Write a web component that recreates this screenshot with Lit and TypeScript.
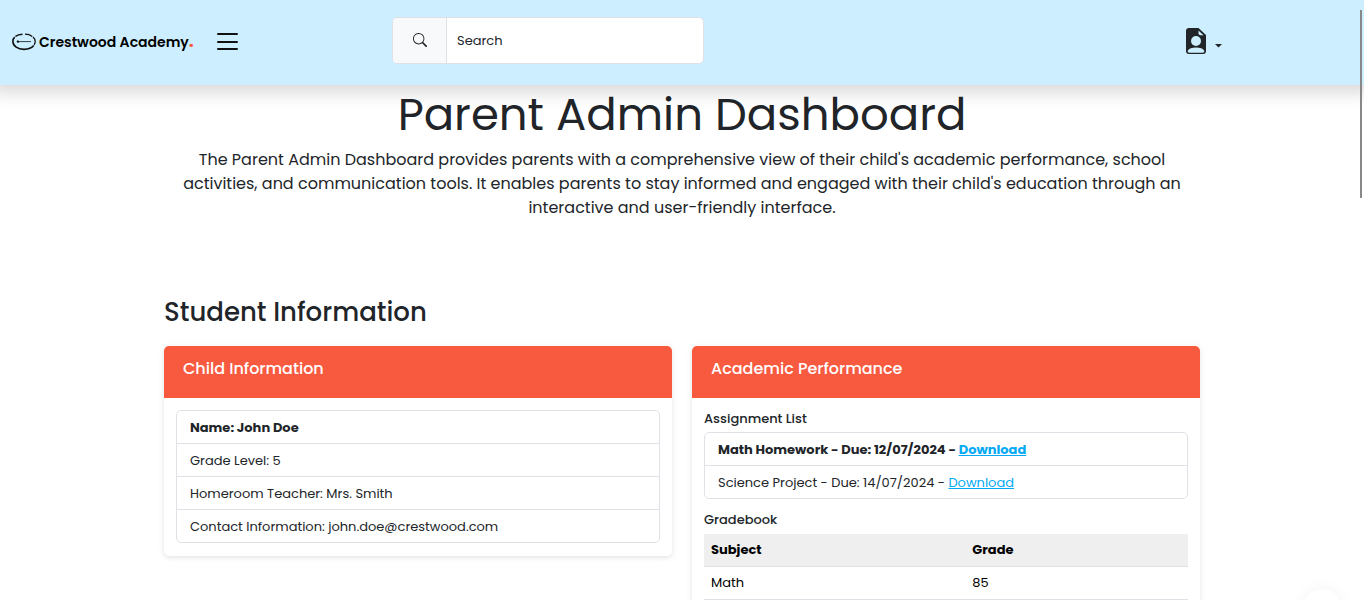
import { LitElement, html, css } from "lit";
import { customElement, state } from "lit/decorators.js";

const font = css`Poppins, Inter, "Open Sans", sans-serif`;

@customElement("site-header")
class SiteHeader extends LitElement {
  static styles = css`
    :host {
      display: block;
      position: relative;
      z-index: 1;
      background: #cceeff;
      box-shadow: 0 0 16px 8px rgba(0, 0, 0, 0.15);
      font-family: ${font};
    }
    .bar {
      display: flex;
      align-items: center;
      box-sizing: border-box;
      padding: 17px 12px 21px;
    }
    .start {
      display: flex;
      align-items: center;
      box-sizing: border-box;
      flex: 0 0 380px;
      gap: 20px;
      padding-top: 2px;
    }
    .brand {
      display: flex;
      align-items: center;
      gap: 3px;
      color: #000;
      font-size: 14px;
      line-height: 24px;
      font-weight: 600;
      text-decoration: none;
      white-space: nowrap;
    }
    .dot {
      color: #f85a40;
      font-size: 18px;
      line-height: 1;
      font-weight: 700;
    }
    button {
      display: flex;
      align-items: center;
      border: 0;
      padding: 0;
      background: none;
      color: #212529;
      font: inherit;
    }
    .search {
      display: flex;
      box-sizing: border-box;
      flex: 0 1 312px;
      height: 47px;
      border: 1px solid #dee2e6;
      border-radius: 5px;
      background: #fff;
      overflow: hidden;
    }
    .search button {
      box-sizing: border-box;
      flex: 0 0 54px;
      justify-content: center;
      padding-bottom: 2px;
      border-right: 1px solid #dee2e6;
      background: #f8f9fa;
    }
    input {
      flex: 1;
      min-width: 0;
      border: 0;
      outline: 0;
      padding: 0 10px;
      background: none;
      color: #212529;
      font-family: inherit;
      font-size: 13px;
    }
    input::placeholder { color: #212529; opacity: 1; }
    .account {
      gap: 8px;
      margin-left: auto;
      margin-right: 130px;
    }
    .caret { margin-top: 10px; }
    svg { display: block; }
  `;

  render() {
    return html`
      <header class="bar">
        <div class="start">
          <a class="brand" href="#">
            <svg width="24" height="18" viewBox="0 0 24 18" fill="none" stroke="#111" aria-hidden="true">
              <path d="M10.500 1.300C7.500 1.400 5 2.200 3.400 3.500M2.700 4.200C1.400 5.400.8 6.800.9 8.600c.2 4.400 4.800 7.800 11.100 7.800 4.300 0 7.900-1.400 9.800-3.800" stroke-width="1.600" />
              <path d="M13 1.200c3 0 5.600.9 7.300 2.200M21 4c1.400 1.200 2.200 2.700 2.200 4.500 0 1.200-.4 2.300-1 3.300" stroke-width="1.300" />
              <path d="M6 8.600h13" stroke-width=".8" />
              <path d="M4.500 8.600l1-1.300 1.500.7v1.400l-1.500.4z" fill="#111" stroke="none" />
            </svg>
            <span>Crestwood Academy<span class="dot">.</span></span>
          </a>
          <button type="button" aria-label="Toggle menu">
            <svg width="26" height="26" viewBox="0 0 26 26" stroke="#111" stroke-width="2" stroke-linecap="round">
              <path d="M4 5h19M4 13h19M4 20h19" />
            </svg>
          </button>
        </div>
        <form class="search" role="search" @submit=${(e: Event) => e.preventDefault()}>
          <button type="submit" aria-label="Search">
            <svg width="14" height="14" viewBox="0 0 16 16" fill="currentColor">
              <path d="M11.742 10.344a6.500 6.500 0 1 0-1.397 1.398h-.001q.044.060.098.115l3.850 3.850a1 1 0 0 0 1.415-1.414l-3.850-3.850a1 1 0 0 0-.115-.1zM12 6.500a5.500 5.500 0 1 1-11 0 5.500 5.500 0 0 1 11 0" />
            </svg>
          </button>
          <input type="search" placeholder="Search" aria-label="Search" />
        </form>
        <button class="account" type="button" aria-label="Account" aria-haspopup="menu">
          <svg width="22" height="28" viewBox="0 0 22 28">
            <path d="M4 1h9.500l7.500 7v16a3 3 0 0 1-3 3H4a3 3 0 0 1-3-3V4a3 3 0 0 1 3-3z" fill="#212529" />
            <path d="M13.500 3.500v2.700a2 2 0 0 0 2 2h3z" fill="#cceeff" />
            <circle cx="11" cy="14" r="5" fill="#cceeff" />
            <path d="M2.700 23.800C4 21.600 7 20.600 11 20.600s7 1 8.300 3.200c-.1 1.400-.7 1.900-1.500 1.900H4.200c-.8 0-1.400-.5-1.500-1.900z" fill="#cceeff" />
          </svg>
          <svg class="caret" width="7" height="4" viewBox="0 0 7 4"><path d="M0 0h7L3.500 3.500z" fill="#212529" /></svg>
        </button>
      </header>
    `;
  }
}

@customElement("info-card")
class InfoCard extends LitElement {
  static properties = { heading: { type: String } };
  declare heading: string;
  static styles = css`
    :host {
      display: block;
      border-radius: 5px;
      overflow: hidden;
      background: #fff;
      box-shadow: 0 2px 4px rgba(0, 0, 0, 0.075), 0 0 10px rgba(0, 0, 0, 0.05);
    }
    .title {
      margin: 0;
      padding: 13px 19px 19px;
      background: #f85a40;
      color: #fff;
      font-size: 16px;
      line-height: 20px;
      font-weight: 500;
    }
    .body { padding: 12px 12px 13px; }
  `;

  render() {
    return html`<h3 class="title">${this.heading}</h3><div class="body"><slot></slot></div>`;
  }
}

@customElement("app-root")
class AppRoot extends LitElement {
  @state() child = [
    "Name: John Doe",
    "Grade Level: 5",
    "Homeroom Teacher: Mrs. Smith",
    "Contact Information: john.doe@crestwood.com",
  ];
  @state() assignments = ["Math Homework - Due: 12/07/2024", "Science Project - Due: 14/07/2024"];
  @state() grades = [["Math", "85"]];

  static styles = css`
    :host {
      display: block;
      position: relative;
      height: 100vh;
      overflow: hidden;
      background: #fff;
      color: #212529;
      font-family: ${font};
      font-size: 13px;
      line-height: 20px;
    }
    .page {
      box-sizing: border-box;
      max-width: 1060px;
      margin: 0 auto;
      padding: 3px 12px 0;
    }
    .intro { text-align: center; }
    h1 {
      margin: 0 0 6px;
      font-size: 45px;
      line-height: 54px;
      font-weight: 400;
    }
    .lead {
      margin: 0;
      padding: 0 16px;
      font-size: 16px;
      line-height: 24px;
    }
    h2 {
      margin: 76px 0 18px;
      font-size: 26px;
      line-height: 32px;
      font-weight: 500;
    }
    .cards {
      display: grid;
      grid-template-columns: 1fr 1fr;
      align-items: start;
      gap: 20px;
    }
    .list {
      margin: 0;
      padding: 0;
      list-style: none;
      border: 1px solid #dee2e6;
      border-radius: 5px;
    }
    .list li { padding: 7px 13px 5px; }
    .list li + li { border-top: 1px solid #dee2e6; }
    .list li:first-child { font-weight: 700; }
    .list a { color: #03a9f4; }
    h4 {
      margin: 0 0 4px;
      font-size: 13px;
      line-height: 18px;
      font-weight: 500;
    }
    .list + h4 { margin-top: 12px; margin-bottom: 5px; }
    table {
      width: 100%;
      border-collapse: collapse;
      color: #000;
    }
    th, td {
      padding: 6px 7px;
      border-bottom: 1px solid #dee2e6;
      text-align: left;
    }
    th { background: #efefef; font-weight: 700; }
    th:first-child { width: 54%; box-sizing: border-box; }
    .thumb {
      position: absolute;
      z-index: 2;
      top: 10px;
      right: 2px;
      width: 2px;
      height: 188px;
      background: #888;
    }
    .fab {
      position: absolute;
      right: 22px;
      bottom: -29px;
      width: 40px;
      height: 40px;
      border: 0;
      border-radius: 50%;
      background: #fff;
      box-shadow: 0 0 16px rgba(0, 0, 0, 0.05);
    }
  `;

  render() {
    return html`
      <site-header></site-header>
      <main class="page">
        <section class="intro">
          <h1>Parent Admin Dashboard</h1>
          <p class="lead">
            The Parent Admin Dashboard provides parents with a comprehensive view of their child's academic
            performance, school activities, and communication tools. It enables parents to stay informed and
            engaged with their child's education through an interactive and user-friendly interface.
          </p>
        </section>
        <h2>Student Information</h2>
        <div class="cards">
          <info-card heading="Child Information">
            <ul class="list">${this.child.map((line) => html`<li>${line}</li>`)}</ul>
          </info-card>
          <info-card heading="Academic Performance">
            <h4>Assignment List</h4>
            <ul class="list">
              ${this.assignments.map((a) => html`<li>${a} - <a href="#">Download</a></li>`)}
            </ul>
            <h4>Gradebook</h4>
            <table>
              <thead><tr><th scope="col">Subject</th><th scope="col">Grade</th></tr></thead>
              <tbody>${this.grades.map(([s, g]) => html`<tr><td>${s}</td><td>${g}</td></tr>`)}</tbody>
            </table>
          </info-card>
        </div>
      </main>
      <button class="fab" type="button" aria-label="Back to top"></button>
      <div class="thumb"></div>
    `;
  }
}
